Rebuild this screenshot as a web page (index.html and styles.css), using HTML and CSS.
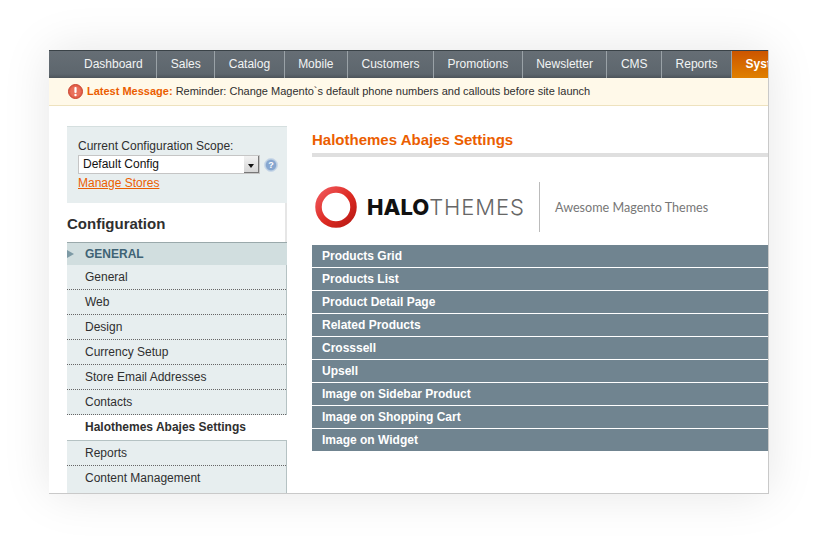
FILE: index.html
```html
<!DOCTYPE html>
<html lang="en">
<head>
  <meta charset="utf-8">
  <title>Halothemes Abajes Settings</title>
  <link rel="stylesheet" href="styles.css">
</head>
<body>
<div class="window">
  <ul class="nav">
    <li>Dashboard</li>
    <li>Sales</li>
    <li>Catalog</li>
    <li>Mobile</li>
    <li>Customers</li>
    <li>Promotions</li>
    <li>Newsletter</li>
    <li>CMS</li>
    <li>Reports</li>
    <li class="active">System</li>
  </ul>
  <div class="notice">
    <svg class="notice-icon" width="15" height="15" viewBox="0 0 15 15">
      <circle cx="7.5" cy="7.5" r="7" fill="#e2604c" stroke="#c9442f"/>
      <circle cx="7.5" cy="7.5" r="5.2" fill="#e9705b"/>
      <rect x="6.4" y="3" width="2.2" height="6" rx="1" fill="#fff"/>
      <circle cx="7.5" cy="11" r="1.2" fill="#fff"/>
    </svg>
    <b>Latest Message:</b> Reminder: Change Magento`s default phone numbers and callouts before site launch
  </div>
  <div class="content">
    <div class="sidebar">
      <div class="scope">
        <div>Current Configuration Scope:</div>
        <div class="scope-row">
          <div class="select">
            <span>Default Config</span>
            <span class="select-btn"></span>
          </div>
          <svg class="help" width="14" height="14" viewBox="0 0 14 14">
            <circle cx="7" cy="7" r="6.5" fill="#b4c9e0" stroke="#cbd9e8"/>
            <circle cx="7" cy="7" r="5.2" fill="#86a6cf"/>
            <text x="7" y="10.2" text-anchor="middle" class="help-mark">?</text>
          </svg>
        </div>
        <a class="manage">Manage Stores</a>
      </div>
      <h3 class="side-title">Configuration</h3>
      <div class="group">GENERAL</div>
      <ul class="side-list">
        <li>General</li>
        <li>Web</li>
        <li>Design</li>
        <li>Currency Setup</li>
        <li>Store Email Addresses</li>
        <li>Contacts</li>
        <li class="current">Halothemes Abajes Settings</li>
        <li>Reports</li>
        <li>Content Management</li>
      </ul>
    </div>
    <div class="main">
      <h3 class="main-title">Halothemes Abajes Settings</h3>
      <div class="logo">
        <svg class="ring" width="44" height="44" viewBox="0 0 44 44">
          <defs>
            <linearGradient id="ringfill" x1="0" y1="0" x2="1" y2="1">
              <stop offset="0" stop-color="#f0585c"/>
              <stop offset="0.55" stop-color="#dc2a22"/>
              <stop offset="1" stop-color="#b81a14"/>
            </linearGradient>
          </defs>
          <circle cx="22" cy="22" r="17.5" fill="none" stroke="url(#ringfill)" stroke-width="6.5"/>
        </svg>
        <span class="logo-name"><b>HALO</b>THEMES</span>
        <span class="logo-tag">Awesome Magento Themes</span>
      </div>
      <div class="bars">
        <div>Products Grid</div>
        <div>Products List</div>
        <div>Product Detail Page</div>
        <div>Related Products</div>
        <div>Crosssell</div>
        <div>Upsell</div>
        <div>Image on Sidebar Product</div>
        <div>Image on Shopping Cart</div>
        <div>Image on Widget</div>
      </div>
    </div>
  </div>
</div>
</body>
</html>
```

FILE: styles.css
```css
html, body {
    margin: 0;
    padding: 0;
    background: #fff;
}
body {
    padding: 50px 49px 50px 49px;
    font-family: "Liberation Sans", Arial, sans-serif;
    font-size: 12px;
    color: #2f2f2f;
    overflow: hidden;
}
ul {
    list-style: none;
    margin: 0;
    padding: 0;
}
.window {
    display: flex;
    flex-direction: column;
    width: 719px;
    height: 443px;
    overflow: hidden;
    background: #fff;
    border-right: 1px solid #c9c9c9;
    border-bottom: 1px solid #c9c9c9;
    box-shadow: 0 0 45px rgba(0, 0, 0, .1);
}
.nav {
    flex: none;
    display: flex;
    height: 27px;
    padding-left: 21.5px;
    background: linear-gradient(#666e75, #5d666d 85%, #4c545a);
    border-top: 1px solid #3a4247;
    white-space: nowrap;
}
.nav li {
    flex: none;
    padding: 0 13.5px;
    line-height: 27px;
    color: #f2f4f4;
    border-right: 1px solid #9aa2a7;
}
.nav li.active {
    font-weight: bold;
    color: #fff;
    border-right: 0;
    background: linear-gradient(#cc5500, #e08000);
}
.notice {
    flex: none;
    height: 27px;
    padding-left: 19px;
    line-height: 27px;
    font-size: 11px;
    background: #fff9e9;
    border-bottom: 1px solid #eee2be;
    display: flow-root;
}
.notice-icon {
    float: left;
    margin: 6px 4px 0 0;
}
.notice b {
    color: #eb5e00;
}
.content {
    flex: 1;
    min-height: 0;
    display: flex;
    padding: 20px 0 0 18px;
}
.sidebar {
    flex: none;
    display: flex;
    flex-direction: column;
    width: 220px;
    margin-right: 25px;
}
.scope {
    flex: none;
    height: 63px;
    padding: 13px 11px 0;
    background: #e7eeef;
    border-top: 1px solid #d5dfdf;
    line-height: 12px;
}
.scope-row {
    display: flex;
    align-items: center;
    gap: 4px;
    margin: 3px 0 3px;
}
.select {
    flex: none;
    display: flex;
    justify-content: space-between;
    width: 182px;
    height: 19px;
    line-height: 17px;
    box-sizing: border-box;
    padding-left: 4px;
    color: #111;
    background: #fff;
    border: 1px solid #c5c5c5;
}
.select-btn {
    position: relative;
    width: 14px;
    background: linear-gradient(#f2f2f2, #d6d6d6);
    border-right: 1px solid #777;
    border-bottom: 1px solid #777;
}
.select-btn::after {
    content: "";
    position: absolute;
    left: 4px;
    top: 8px;
    border: 3px solid transparent;
    border-top: 4px solid #111;
    border-bottom: 0;
}
.help {
    flex: none;
}
.help-mark {
    font-size: 9px;
    font-weight: bold;
    fill: #fff;
}
.manage {
    color: #eb5e00;
    text-decoration: underline;
}
.side-title {
    flex: none;
    margin: 0;
    height: 39px;
    line-height: 42px;
    font-size: 15px;
    color: #2f2f2f;
    border-right: 2px solid #e6e6e6;
    box-sizing: border-box;
}
.group {
    flex: none;
    height: 23px;
    padding-left: 18px;
    line-height: 23px;
    font-weight: bold;
    color: #3f6375;
    background: #d1dedf;
    border-top: 1px solid #9aa9ab;
    box-sizing: border-box;
    position: relative;
}
.group::before {
    content: "";
    position: absolute;
    left: 0;
    top: 7px;
    border: 4px solid transparent;
    border-left: 7px solid #7d9aa5;
    border-right: 0;
}
.side-list {
    flex: 1;
    background: #e7eeef;
    border-right: 1px solid #b5c2c3;
}
.side-list li {
    height: 25px;
    box-sizing: border-box;
    padding-left: 18px;
    line-height: 24px;
    color: #2f2f2f;
    border-bottom: 1px dotted #666;
}
.side-list li:last-child {
    border-bottom: 0;
}
.side-list li.current {
    height: 26px;
    margin-right: -1px;
    font-weight: bold;
    background: #fff;
    border-bottom: 1px solid #b5c2c3;
}
.main {
    flex: 1;
    min-width: 0;
}
.main-title {
    margin: 0;
    height: 27px;
    line-height: 28px;
    font-size: 15px;
    color: #eb5e00;
    border-bottom: 4px solid #dfdfdf;
}
.logo {
    display: flex;
    align-items: center;
    height: 50px;
    margin-top: 25px;
    margin-bottom: 13px;
    padding-left: 2px;
}
.ring {
    flex: none;
}
.logo-name {
    flex: none;
    margin-left: 9px;
    width: 173px;
    font-family: Inter, Lato, sans-serif;
    font-size: 22px;
    letter-spacing: .9px;
    line-height: 50px;
    height: 50px;
    color: #666;
    font-weight: 300;
    border-right: 1px solid #bbb;
    box-sizing: border-box;
}
.logo-name b {
    font-weight: 800;
    letter-spacing: 0;
    color: #111;
}
.logo-tag {
    margin-left: 15px;
    font-family: Lato, "Open Sans", sans-serif;
    font-size: 12.6px;
    color: #777;
}
.bars div {
    height: 22px;
    margin-bottom: 1px;
    padding-left: 10px;
    line-height: 22px;
    font-weight: bold;
    color: #fff;
    background: #708490;
}
```
